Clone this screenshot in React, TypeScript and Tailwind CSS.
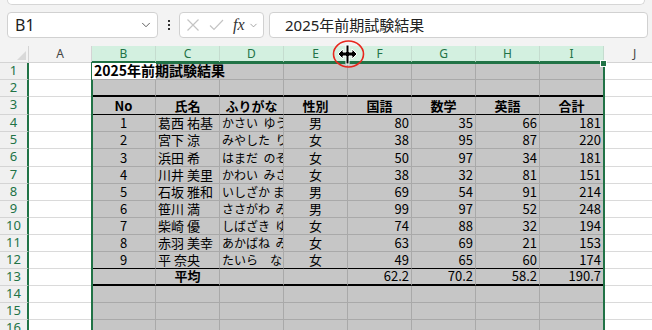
import { ChevronDown } from 'lucide-react'

type Cell = { t?: string; a?: 'l' | 'c' | 'r'; b?: boolean; s?: boolean }

const colLetters = ['B', 'C', 'D', 'E', 'F', 'G', 'H', 'I']

const heights = [
  'h-[17px]',
  'h-[17px]',
  'h-[18px]',
  'h-[17px]',
  'h-[17px]',
  'h-[18px]',
  'h-[17px]',
  'h-[17px]',
  'h-[17px]',
  'h-[17px]',
  'h-[17px]',
  'h-[17px]',
  'h-[17px]',
  'h-[17px]',
  'h-[17px]',
  'h-[17px]',
]

const students = [
  ['1', '葛西 祐基', 'かさい  ゆうき', '男', '80', '35', '66', '181'],
  ['2', '宮下 涼', 'みやした  りょう', '女', '38', '95', '87', '220'],
  ['3', '浜田 希', 'はまだ  のぞみ', '女', '50', '97', '34', '181'],
  ['4', '川井 美里', 'かわい  みさと', '女', '38', '32', '81', '151'],
  ['5', '石坂 雅和', 'いしざか まさかず', '男', '69', '54', '91', '214'],
  ['6', '笹川 満', 'ささがわ  みつる', '男', '99', '97', '52', '248'],
  ['7', '柴崎 優', 'しばざき  ゆう', '女', '74', '88', '32', '194'],
  ['8', '赤羽 美幸', 'あかばね  みゆき', '女', '63', '69', '21', '153'],
  ['9', '平 奈央', 'たいら　なお', '女', '49', '65', '60', '174'],
]

function buildRows(): Cell[][] {
  const empty = (): Cell[] => colLetters.map(() => ({}))
  const rows: Cell[][] = []
  rows.push([{ t: '2025年前期試験結果', a: 'l', b: true }, {}, {}, {}, {}, {}, {}, {}])
  rows.push(empty())
  rows.push(
    ['No', '氏名', 'ふりがな', '性別', '国語', '数学', '英語', '合計'].map((t) => ({ t, a: 'c', b: true })),
  )
  for (const s of students) {
    rows.push([
      { t: s[0], a: 'c' },
      { t: s[1], a: 'l' },
      { t: s[2], a: 'l', s: true },
      { t: s[3], a: 'c' },
      { t: s[4], a: 'r' },
      { t: s[5], a: 'r' },
      { t: s[6], a: 'r' },
      { t: s[7], a: 'r' },
    ])
  }
  rows.push([
    {},
    { t: '平均', a: 'c', b: true },
    {},
    {},
    { t: '62.2', a: 'r' },
    { t: '70.2', a: 'r' },
    { t: '58.2', a: 'r' },
    { t: '190.7', a: 'r' },
  ])
  rows.push(empty(), empty(), empty())
  return rows
}

const rows = buildRows()

function bottomBorder(r: number) {
  if (r === 2 || r === 13) return 'border-b-2 border-b-black'
  if (r === 3 || r === 12) return 'border-b border-b-black'
  return 'border-b border-b-[#a9a9a9]'
}

function SheetRow({ r, cells }: { r: number; cells: Cell[] }) {
  return (
    <div className={`flex ${heights[r - 1]}`}>
      <div className="flex w-[29px] shrink-0 items-center justify-center border-b border-r-2 border-b-[#d4d4d4] border-r-[#217346] bg-[#f0f0f0] pb-[1px] text-[13px] text-[#217346] [font-family:'Noto_Sans',sans-serif]">
        {r}
      </div>
      <div className="w-[63px] shrink-0 border-b border-r border-[#dadada] bg-white" />
      {cells.map((c, i) => {
        const first = r === 1 && i === 0
        const noRight = r === 1 && (i === 0 || i === 1)
        const align = c.a === 'r' ? 'justify-end pr-[2px]' : c.a === 'c' ? 'justify-center' : 'justify-start pl-[2px]'
        return (
          <div
            key={i}
            className={`flex w-[64px] shrink-0 items-end pb-[1px] leading-[15px] whitespace-pre ${align} ${
              noRight ? '' : 'border-r border-r-[#a9a9a9]'
            } ${first ? 'relative z-10 overflow-visible bg-white text-[14px]' : 'overflow-hidden bg-[#c6c6c6]'} ${
              r === 1 ? 'border-b border-b-[#a9a9a9]' : bottomBorder(r)
            } ${c.b ? 'font-bold' : ''} ${c.s ? 'text-[12px]' : ''}`}
          >
            {c.t}
          </div>
        )
      })}
      <div className="flex-1 border-b border-[#dadada] bg-white" />
    </div>
  )
}

function ResizeCursor() {
  return (
    <svg className="absolute left-[330px] top-[-9px]" width="38" height="34" viewBox="0 0 38 34">
      <ellipse cx="18.5" cy="17" rx="15" ry="13" fill="none" stroke="#e8261d" strokeWidth="1.6" />
      <path
        d="M16 8 H19 V15 H22 V12 L27 17 L22 22 V19 H19 V27 H16 V19 H13 V22 L8 17 L13 12 V15 H16 Z"
        fill="#000"
        stroke="#fff"
        strokeWidth="1"
        strokeLinejoin="miter"
      />
    </svg>
  )
}

export default function App() {
  return (
    <div className="relative h-[330px] w-[652px] overflow-hidden bg-[#f3f3f3] text-[13px] text-black [font-family:'Noto_Sans_CJK_JP',sans-serif]">
      <div className="mx-[7px] h-[5px] rounded-b-[6px] border border-t-0 border-[#d6d6d6] bg-white" />

      <div className="mt-[7px] flex h-[26px] items-stretch pl-[7px] pr-[4px] [font-family:'Noto_Sans','Noto_Sans_CJK_JP',sans-serif]">
        <div className="flex w-[151px] items-center justify-between rounded-[4px] border border-[#d1d1d1] bg-white pl-[7px] pr-[4px] text-[16px] text-[#222]">
          <span>B1</span>
          <ChevronDown size={14} strokeWidth={1.6} className="text-[#555]" />
        </div>
        <div className="flex w-[21px] flex-col items-center justify-center gap-[2px]">
          <span className="h-[2px] w-[2px] bg-[#333]" />
          <span className="h-[2px] w-[2px] bg-[#333]" />
          <span className="h-[2px] w-[2px] bg-[#333]" />
        </div>
        <div className="flex w-[85px] items-center rounded-[4px] border border-[#d1d1d1] bg-white pl-[6px]">
          <svg width="14" height="14" viewBox="0 0 14 14" className="mr-[9px]">
            <path d="M1.5 1.5 L12.5 12.5 M12.5 1.5 L1.5 12.5" stroke="#c4c4c4" strokeWidth="1.2" />
          </svg>
          <svg width="15" height="14" viewBox="0 0 15 14" className="mr-[9px]">
            <path d="M1 7.5 L5 11.5 L14 2" stroke="#c4c4c4" strokeWidth="1.2" fill="none" />
          </svg>
          <span className="mr-[3px] text-[16px] leading-none text-[#333] italic [font-family:'Liberation_Serif',serif]">
            fx
          </span>
          <ChevronDown size={11} strokeWidth={1.6} className="text-[#888]" />
        </div>
        <div className="ml-[5px] flex flex-1 items-center rounded-[4px] border border-[#d1d1d1] bg-white pl-[15px] text-[15px] text-[#222]">
          2025年前期試験結果
        </div>
      </div>

      <div className="relative mt-[8px]">
        <div className="flex h-[17px] text-[12px] [font-family:'Noto_Sans',sans-serif]">
          <div className="relative w-[29px] shrink-0 border-b border-r border-[#d4d4d4] bg-[#f3f3f3]">
            <svg className="absolute right-[2px] bottom-[2px]" width="9" height="9" viewBox="0 0 9 9">
              <path d="M9 0 V9 H0 Z" fill="#d9d9d9" />
            </svg>
          </div>
          <div className="flex w-[63px] shrink-0 items-center justify-center border-b border-r border-[#d4d4d4] bg-[#f3f3f3] text-[#444]">
            A
          </div>
          {colLetters.map((l) => (
            <div
              key={l}
              className="flex w-[64px] shrink-0 items-center justify-center border-r border-b-2 border-r-[#c5dccf] border-b-[#217346] bg-[#d3f0e0] text-[#217346]"
            >
              {l}
            </div>
          ))}
          <div className="flex flex-1 items-center justify-start border-b border-[#d4d4d4] bg-[#f3f3f3] pl-[29px] text-[#444]">
            J
          </div>
        </div>

        {rows.map((cells, i) => (
          <SheetRow key={i} r={i + 1} cells={cells} />
        ))}

        <div className="pointer-events-none absolute left-[91px] top-[16px] h-[400px] w-[514px] border-2 border-[#217346]" />
        <div className="pointer-events-none absolute left-[600px] top-[14px] h-[7px] w-[7px] border border-white bg-[#217346]" />
        <ResizeCursor />
      </div>
    </div>
  )
}
